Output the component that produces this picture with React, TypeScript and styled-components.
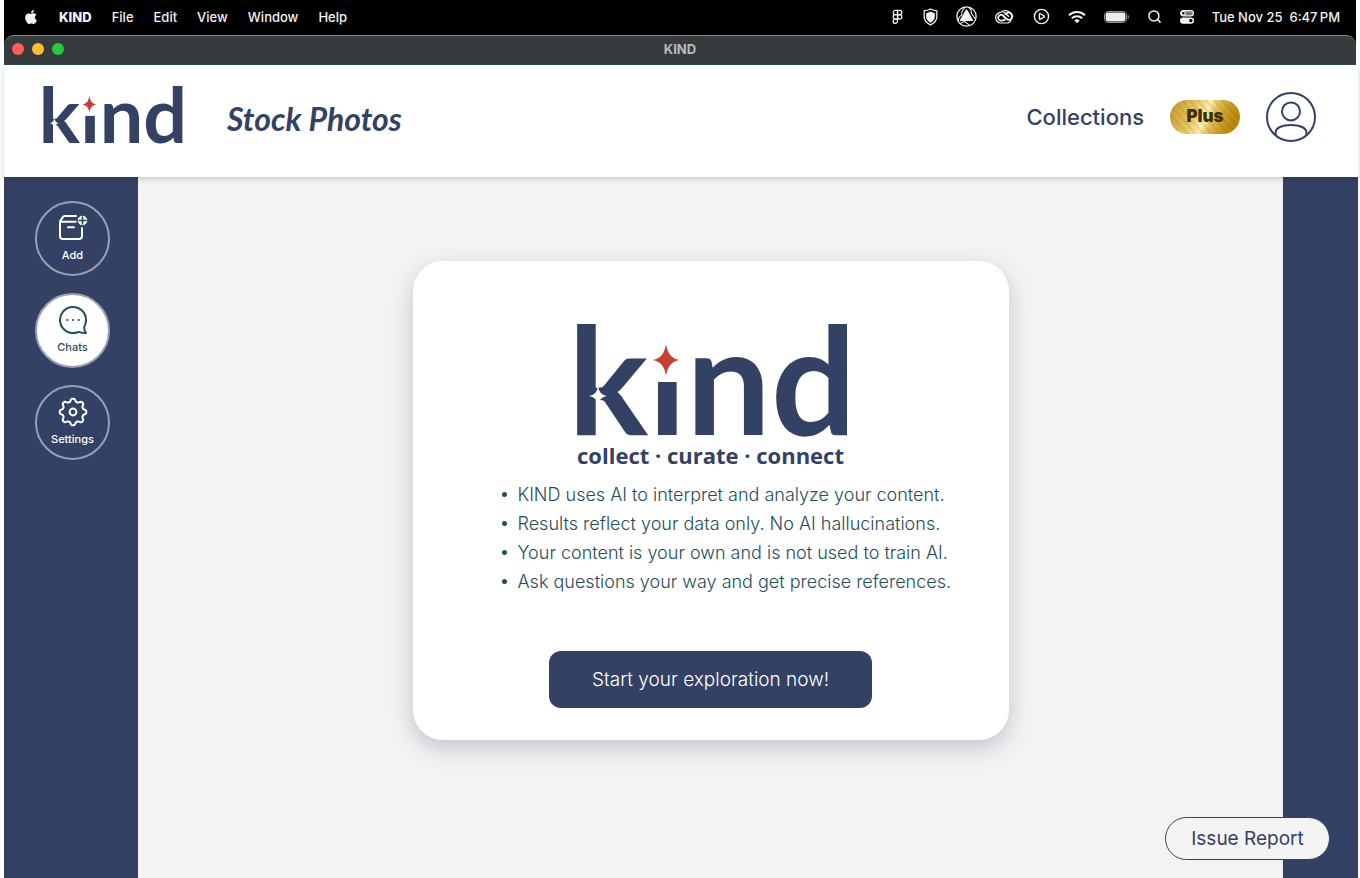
import React from "react";
import styled, { createGlobalStyle, css } from "styled-components";
import { CirclePlay, Figma, Search } from "lucide-react";
import { FaApple } from "react-icons/fa";

const navy = "#334164";
const teal = "#264d5c";

const GlobalStyle = createGlobalStyle`
  *, *::before, *::after { box-sizing: border-box; }
  body { margin: 0; background: #fff; font-family: Inter, "Liberation Sans", sans-serif; }
  button { font: inherit; cursor: pointer; }
`;

const Page = styled.div`
  position: relative;
  display: flex;
  flex-direction: column;
  min-height: 100vh;
  padding: 0 2px 0 4px;
`;

const Desktop = styled.div`
  margin-right: 2px;
  background: #000;
`;

const MenuBar = styled.div`
  display: flex;
  justify-content: space-between;
  align-items: center;
  height: 35px;
  padding: 0 16px 2px 19px;
  color: #f2f2f2;
  font-size: 13px;
  line-height: 18px;
`;

const MenuGroup = styled.nav<{ $gap: number }>`
  display: flex;
  align-items: center;
  gap: ${(p) => p.$gap}px;
  white-space: pre;
  svg { display: block; flex: none; }
`;

const MenuItem = styled.button<{ $bold?: boolean }>`
  padding: 0;
  border: 0;
  background: none;
  color: inherit;
  font-weight: ${(p) => (p.$bold ? 800 : 500)};
`;

const Clock = styled.time`
  font-weight: 500;
`;

const TitleBar = styled.div`
  display: grid;
  grid-template-columns: 1fr auto 1fr;
  align-items: center;
  height: 30px;
  padding: 0 8px 3px;
  border-top: 1px solid #83878a;
  border-bottom: 1px solid #2f4d5b;
  border-radius: 10px 10px 0 0;
  background: #363b3e;
  color: #b9bcbe;
  font-size: 13px;
  font-weight: 700;
`;

const Lights = styled.div`
  display: flex;
  gap: 8px;
`;

const Light = styled.button<{ $color: string }>`
  width: 12px;
  height: 12px;
  padding: 0;
  border: 0;
  border-radius: 50%;
  background: ${(p) => p.$color};
`;

const Header = styled.header`
  position: relative;
  display: flex;
  align-items: flex-start;
  height: 112px;
  padding: 19px 42px 0 40px;
  background: #fff;
  box-shadow: 0 2px 6px rgba(0, 0, 0, 0.18);
  color: ${navy};
`;

const Wordmark = styled.svg<{ $width: number }>`
  display: block;
  flex: none;
  width: ${(p) => p.$width}px;
  height: auto;
  overflow: visible;
  text {
    font: 700 150px Lato, sans-serif;
    fill: ${navy};
  }
`;

const Title = styled.h1`
  margin: 15px auto 0 46px;
  font: italic 700 32px/40px Lato, "Open Sans", sans-serif;
`;

const HeaderActions = styled.div`
  display: flex;
  align-items: center;
  gap: 26px;
  margin-top: 8px;
`;

const CollectionsLink = styled.a`
  color: ${navy};
  font-size: 22px;
  font-weight: 500;
  line-height: 28px;
  text-decoration: none;
`;

const PlusBadge = styled.button`
  width: 70px;
  height: 34px;
  padding: 0 0 2px;
  border: 0;
  border-radius: 17px;
  background:
    repeating-linear-gradient(48deg, rgba(110, 70, 0, 0.1) 0 2px, transparent 3px 6px),
    linear-gradient(112deg, #c1952a 0%, #d6ae45 18%, #e9cc6c 36%, #fdf0b0 50%, #e3bf55 60%, #cb9c22 74%, #b98708 88%, #c79a25 100%);
  color: #3c3102;
  font-size: 17px;
  font-weight: 900;
`;

const IconButton = styled.button`
  padding: 0;
  border: 0;
  background: none;
  svg { display: block; }
`;

const Body = styled.div`
  display: flex;
  flex: 1;
`;

const Sidebar = styled.nav`
  display: flex;
  flex: none;
  flex-direction: column;
  gap: 17px;
  width: 134px;
  padding: 24px 28px 24px 31px;
  background: ${navy};
`;

const SideButton = styled.button<{ $active?: boolean }>`
  display: flex;
  flex-direction: column;
  align-items: center;
  gap: 4px;
  width: 75px;
  height: 75px;
  padding: 10px 0 0;
  border: 2px solid #99a0b3;
  border-radius: 50%;
  background: transparent;
  color: #fff;
  font-size: 11px;
  font-weight: 500;
  line-height: 16px;
  ${(p) =>
    p.$active &&
    css`
      background: #fff;
      color: ${teal};
    `}
`;

const Main = styled.main`
  display: flex;
  flex: 1;
  justify-content: center;
  align-items: flex-start;
  padding: 84px 24px 137px;
  background: #f3f3f3;
`;

const RightRail = styled.aside`
  flex: none;
  width: 75px;
  background: ${navy};
`;

const Card = styled.section`
  display: flex;
  flex-direction: column;
  align-items: center;
  width: 596px;
  padding: 59px 0 32px;
  border-radius: 30px;
  background: #fff;
  box-shadow: 0 8px 22px rgba(51, 65, 100, 0.26);
`;

const Tagline = styled.p`
  margin: 6px 0 10px;
  color: ${navy};
  font: 700 22px/29px "Open Sans", Lato, sans-serif;
  white-space: nowrap;
`;

const Features = styled.ul`
  align-self: stretch;
  margin: 0 0 55px;
  padding: 0 0 0 89px;
  list-style: none;
  color: ${teal};
  font-size: 18px;
  font-weight: 300;
  line-height: 29px;
  white-space: nowrap;
`;

const Feature = styled.li`
  display: flex;
  align-items: center;
  gap: 11px;
  &::before {
    content: "";
    width: 5px;
    height: 5px;
    border-radius: 50%;
    background: ${teal};
  }
`;

const StartButton = styled.button`
  width: 323px;
  height: 57px;
  padding: 0;
  border: 0;
  border-radius: 12px;
  background: ${navy};
  color: #fff;
  font-size: 19px;
  font-weight: 300;
`;

const IssueButton = styled.button`
  position: absolute;
  right: 30px;
  bottom: 18px;
  width: 165px;
  height: 43px;
  padding: 0;
  border: 1px solid ${navy};
  border-radius: 22px;
  background: #f4f4f4;
  color: ${navy};
  font-size: 19px;
`;

const KindLogo = ({ width }: { width: number }) => (
  <Wordmark $width={width} viewBox="0 0 266 115" role="img" aria-label="kind">
    <text x="-10" y="115">kind</text>
    <rect x="72" y="-4" width="37" height="66" fill="#fff" />
    <path d="M88 24Q90 38 101 40Q90 42 88 56Q86 42 75 40Q86 38 88 24Z" fill="#c93f35" />
    <path d="M20 66Q21 75 29 76Q21 77 20 86Q19 77 11 76Q19 75 20 66Z" fill="#fff" />
  </Wordmark>
);

const ShieldIcon = () => (
  <svg width="15" height="18" viewBox="0 0 14 17" fill="none">
    <path d="M7 1Q10 2.6 13 2.8V8Q13 13 7 16Q1 13 1 8V2.8Q4 2.6 7 1Z" stroke="#f2f2f2" strokeWidth="1.2" />
    <path d="M7 3.4Q9 4.7 11.1 4.9V8Q11 11.8 7 13.9Q3 11.8 2.9 8V4.9Q5 4.7 7 3.4Z" fill="#f2f2f2" />
  </svg>
);

const TriangleIcon = () => (
  <svg width="21" height="21" viewBox="0 0 20 20" fill="none" stroke="#f2f2f2">
    <circle cx="10" cy="10" r="9.2" strokeWidth="1.2" />
    <path d="M10 4L15.4 13.6H4.6Z" fill="#f2f2f2" strokeWidth="1.6" strokeLinejoin="round" />
    <path d="M9 1Q4.5 5 5.6 8.4Q1.5 11 2.4 14.5M12 1.4Q15 3 14.6 7L18.6 12.4M4 16.6L8 14.6L13 18.4" strokeWidth="1" />
  </svg>
);

const CloudIcon = () => (
  <svg width="20" height="15" viewBox="0 0 20 15" fill="none" stroke="#f2f2f2">
    <path d="M5.8 3.4A6.5 6.5 0 1 1 13 14H6A5.3 5.3 0 0 1 5.8 3.4Z" strokeWidth="1.2" />
    <path d="M10.2 10.6Q8 11.8 6 11.6A2.9 2.9 0 1 1 8 6.5L11 9.5Q12.4 11 14.2 10.9A3.7 3.7 0 1 0 10.2 5.6" strokeWidth="1.9" />
    <path d="M8.4 3.4Q10.4 4 12.4 6.2L14 7.8" strokeWidth="1.4" />
  </svg>
);

const PlayIcon = () => <CirclePlay size={17} strokeWidth={2} fill="none" />;

const WifiIcon = () => (
  <svg width="18" height="14" viewBox="0 0 18 14" fill="none" stroke="#f2f2f2" strokeWidth="2">
    <path d="M1 5.2A11.6 11.6 0 0 1 17 5.2M3.8 8.2A7.6 7.6 0 0 1 14.2 8.2" />
    <path d="M9 13.2L6.3 10.5A4 4 0 0 1 11.7 10.5Z" fill="#f2f2f2" stroke="none" />
  </svg>
);

const BatteryIcon = () => (
  <svg width="25" height="12" viewBox="0 0 25 12" fill="none">
    <rect x="0.5" y="0.5" width="22" height="11" rx="3.5" stroke="#8a8a8a" />
    <rect x="1.6" y="1.6" width="19.8" height="8.8" rx="2.4" fill="#ececec" />
    <path d="M24 4.2Q25 6 24 7.8Z" fill="#999" stroke="#999" strokeWidth="0.6" />
  </svg>
);

const ControlsIcon = () => (
  <svg width="14" height="14" viewBox="0 0 14 14" fill="none">
    <rect x="0.6" y="0.6" width="12.8" height="5.2" rx="2.6" fill="#777" stroke="#f2f2f2" strokeWidth="1.2" />
    <circle cx="3.4" cy="3.2" r="1.9" fill="#000" stroke="#f2f2f2" strokeWidth="1.2" />
    <rect x="0" y="7.4" width="14" height="6.4" rx="3.2" fill="#f2f2f2" />
    <circle cx="10.8" cy="10.6" r="1.7" fill="#000" />
  </svg>
);

const AvatarIcon = () => (
  <svg width="50" height="50" viewBox="0 0 50 50" fill="none" stroke={navy} strokeWidth="2">
    <circle cx="25" cy="25" r="24" />
    <circle cx="25" cy="19.4" r="9" />
    <path d="M9.6 43.4V40.6C9.6 35.8 16 33 25 33S40.4 35.8 40.4 40.6V43.4" />
  </svg>
);

const AddIcon = () => (
  <svg width="30" height="30" viewBox="0 0 30 30" fill="none" stroke="#fff" strokeWidth="2" strokeLinecap="round" strokeLinejoin="round">
    <path d="M18 3H7Q5.4 3 4.6 4.4L2 8.6V23Q2 26 5 26H21Q24 26 24 23V15" />
    <path d="M2 8.8H17.6M10 14.2H16" />
    <circle cx="24.5" cy="7.5" r="5.2" fill="#fff" stroke={teal} strokeWidth="1" />
    <path d="M24.5 4.2V10.8M21.2 7.5H27.8" stroke={teal} strokeWidth="1.7" />
  </svg>
);

const ChatIcon = () => (
  <svg width="30" height="30" viewBox="0 0 30 30" fill="none" stroke={teal} strokeWidth="2" strokeLinejoin="round">
    <path d="M15 2A13 13 0 1 0 19.5 27.2C21 26.6 22 27.2 23.6 27.7L28 28Q26.2 25.5 26 22.5Q28 19 28 15A13 13 0 0 0 15 2Z" />
    <g fill={teal} stroke="none">
      <circle cx="9.3" cy="15" r="1.1" />
      <circle cx="15" cy="15" r="1.1" />
      <circle cx="20.7" cy="15" r="1.1" />
    </g>
  </svg>
);

const gearPath = (() => {
  const points: string[] = [];
  for (let i = 0; i <= 96; i += 1) {
    const angle = (i / 96) * Math.PI * 2;
    const wave = Math.cos(angle * 8);
    const radius = 11.9 + 1.5 * Math.tanh(wave * 1.8);
    points.push(`${(15 + radius * Math.cos(angle)).toFixed(2)} ${(15 + radius * Math.sin(angle)).toFixed(2)}`);
  }
  return `M${points.join("L")}Z`;
})();

const GearIcon = () => (
  <svg width="30" height="30" viewBox="0 0 30 30" fill="none" stroke="#fff" strokeWidth="2" strokeLinejoin="round">
    <path d={gearPath} />
    <circle cx="15" cy="15" r="3.4" />
  </svg>
);

const menus = ["File", "Edit", "View", "Window", "Help"];

const features = [
  "KIND uses AI to interpret and analyze your content.",
  "Results reflect your data only. No AI hallucinations.",
  "Your content is your own and is not used to train AI.",
  "Ask questions your way and get precise references.",
];

export default function App() {
  return (
    <Page>
      <GlobalStyle />
      <Desktop>
        <MenuBar>
          <MenuGroup $gap={20}>
            <FaApple size={16} />
            <MenuItem $bold>KIND</MenuItem>
            {menus.map((name) => (
              <MenuItem key={name}>{name}</MenuItem>
            ))}
          </MenuGroup>
          <MenuGroup $gap={18}>
            <Figma size={15} strokeWidth={2} />
            <ShieldIcon />
            <TriangleIcon />
            <CloudIcon />
            <PlayIcon />
            <WifiIcon />
            <BatteryIcon />
            <Search size={15} strokeWidth={2.4} />
            <ControlsIcon />
            <Clock>{"Tue Nov 25  6:47\u2009PM"}</Clock>
          </MenuGroup>
        </MenuBar>
        <TitleBar>
          <Lights>
            <Light $color="#ff5f57" aria-label="Close" />
            <Light $color="#febc2e" aria-label="Minimize" />
            <Light $color="#28c840" aria-label="Zoom" />
          </Lights>
          <span>KIND</span>
        </TitleBar>
      </Desktop>
      <Header>
        <KindLogo width={137} />
        <Title>Stock Photos</Title>
        <HeaderActions>
          <CollectionsLink href="#collections">Collections</CollectionsLink>
          <PlusBadge>Plus</PlusBadge>
          <IconButton aria-label="Account">
            <AvatarIcon />
          </IconButton>
        </HeaderActions>
      </Header>
      <Body>
        <Sidebar>
          <SideButton>
            <AddIcon />
            Add
          </SideButton>
          <SideButton $active>
            <ChatIcon />
            Chats
          </SideButton>
          <SideButton>
            <GearIcon />
            Settings
          </SideButton>
        </Sidebar>
        <Main>
          <Card>
            <KindLogo width={266} />
            <Tagline>collect · curate · connect</Tagline>
            <Features>
              {features.map((text) => (
                <Feature key={text}>{text}</Feature>
              ))}
            </Features>
            <StartButton>Start your exploration now!</StartButton>
          </Card>
        </Main>
        <RightRail />
      </Body>
      <IssueButton>Issue Report</IssueButton>
    </Page>
  );
}
